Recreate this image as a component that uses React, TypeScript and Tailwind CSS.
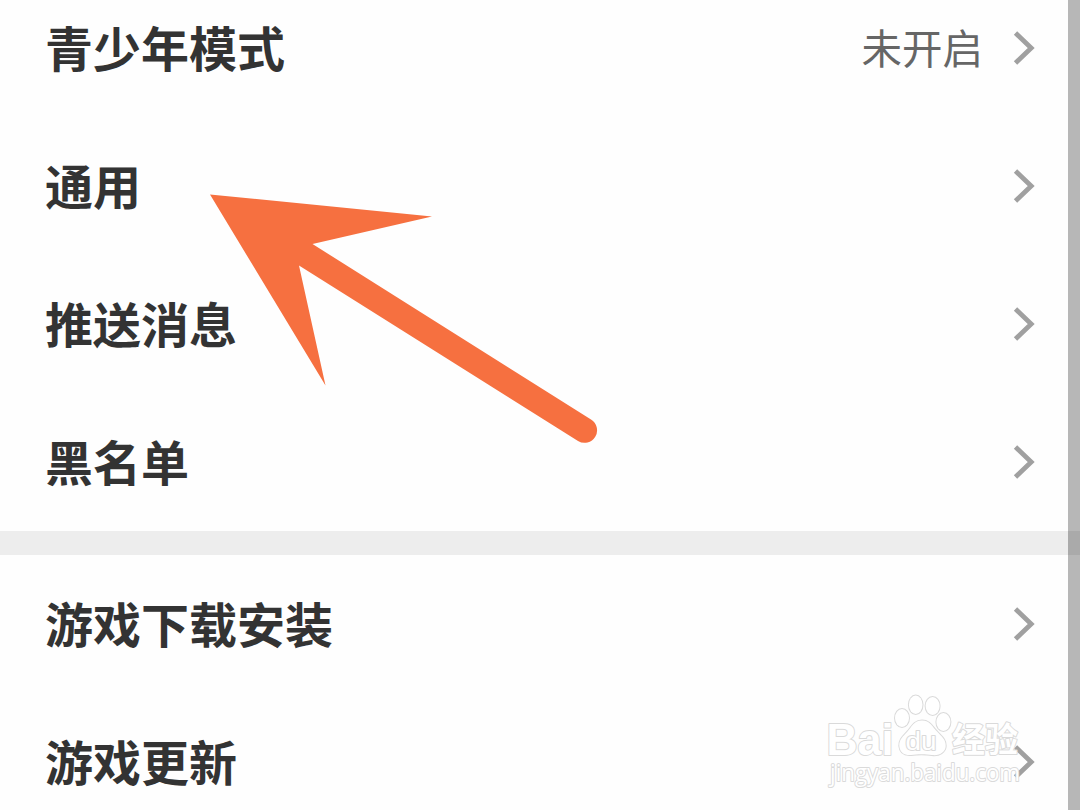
import React from "react";

interface SettingItem {
  label: string;
  value?: string;
}

const accountItems: SettingItem[] = [
  { label: "青少年模式", value: "未开启" },
  { label: "通用" },
  { label: "推送消息" },
  { label: "黑名单" },
];

const gameItems: SettingItem[] = [
  { label: "游戏下载安装" },
  { label: "游戏更新" },
];

const Chevron = () => (
  <svg className="h-9 w-6 shrink-0" viewBox="0 0 24 36" fill="none">
    <path d="M3.5 2.9 L19.2 18 L3.5 33.1" stroke="#a0a0a0" strokeWidth="4.8" />
  </svg>
);

const SettingRow = ({ label, value }: SettingItem) => (
  <li className="flex h-[138px] items-center justify-between pl-[45px] pr-8">
    <span className="pb-1 text-5xl leading-none font-bold text-[#333333]">{label}</span>
    <div className="flex items-center gap-[29px]">
      {value && <span className="pb-0.5 text-[40.5px] leading-none text-[#666666]">{value}</span>}
      <Chevron />
    </div>
  </li>
);

const PointerArrow = () => (
  <svg className="absolute top-0 left-0" width="640" height="460" viewBox="0 0 640 460">
    <path
      d="M210 194.5 L432 216.5 L312.5 244 L591 419.5 A12.5 12.5 0 0 1 578 441 L299 265.5 L325.5 385.5 Z"
      fill="#f67040"
    />
  </svg>
);

const Watermark = () => (
  <svg
    className="absolute top-[690px] left-[820px] overflow-visible"
    width="210"
    height="115"
    viewBox="820 690 210 115"
    fill="#ffffff"
    stroke="#dadada"
    strokeWidth="2"
    paintOrder="stroke"
    strokeLinejoin="round"
  >
    <text x="826.5" y="754.5" fontSize="45" fontWeight="700" textLength="67" lengthAdjust="spacingAndGlyphs" fontFamily="Liberation Sans, sans-serif">
      Bai
    </text>
    <ellipse cx="902" cy="718" rx="7" ry="9" />
    <ellipse cx="915.7" cy="704.8" rx="6.8" ry="9.2" />
    <ellipse cx="932.6" cy="706" rx="7" ry="9" />
    <ellipse cx="943.4" cy="722" rx="7" ry="9" />
    <path d="M922 720.5 C914 720.5 911.5 727 907.5 731.5 C903 736.5 899 739.5 899.3 746 C900 753 905 755.5 911 755 C917 754 926 754 932 755 C939.5 756 945.5 752 945.7 746 C946 739.5 941.5 736.5 937 731.5 C932.5 727 930 720.5 922 720.5 Z" />
    <text x="905.5" y="749.5" fontSize="25" textLength="31" lengthAdjust="spacingAndGlyphs" fontFamily="Liberation Sans, sans-serif">
      du
    </text>
    <text x="952" y="752" fontSize="34" fontWeight="700" textLength="66" lengthAdjust="spacingAndGlyphs" fontFamily="Noto Sans CJK SC, sans-serif">
      经验
    </text>
    <text x="830" y="780.5" fontSize="24" textLength="190" lengthAdjust="spacingAndGlyphs" fontFamily="Open Sans, sans-serif">
      jingyan.baidu.com
    </text>
  </svg>
);

const App = () => {
  return (
    <div className="relative flex h-[810px] w-[1080px] overflow-hidden bg-[#fefefe] font-['Noto_Sans_CJK_SC',sans-serif]">
      <main className="flex-1">
        {/* list is scrolled, so the first row starts above the window */}
        <ul className="-mt-[21px]">
          {accountItems.map((item) => (
            <SettingRow key={item.label} {...item} />
          ))}
        </ul>
        <div className="h-6 bg-[#ededed]" />
        <ul>
          {gameItems.map((item) => (
            <SettingRow key={item.label} {...item} />
          ))}
        </ul>
      </main>
      <aside className="w-3 bg-[#b7b7b7] pt-[531px]">
        <div className="h-6 bg-[#aaaaaa]" />
      </aside>
      <PointerArrow />
      <Watermark />
    </div>
  );
};

export default App;
